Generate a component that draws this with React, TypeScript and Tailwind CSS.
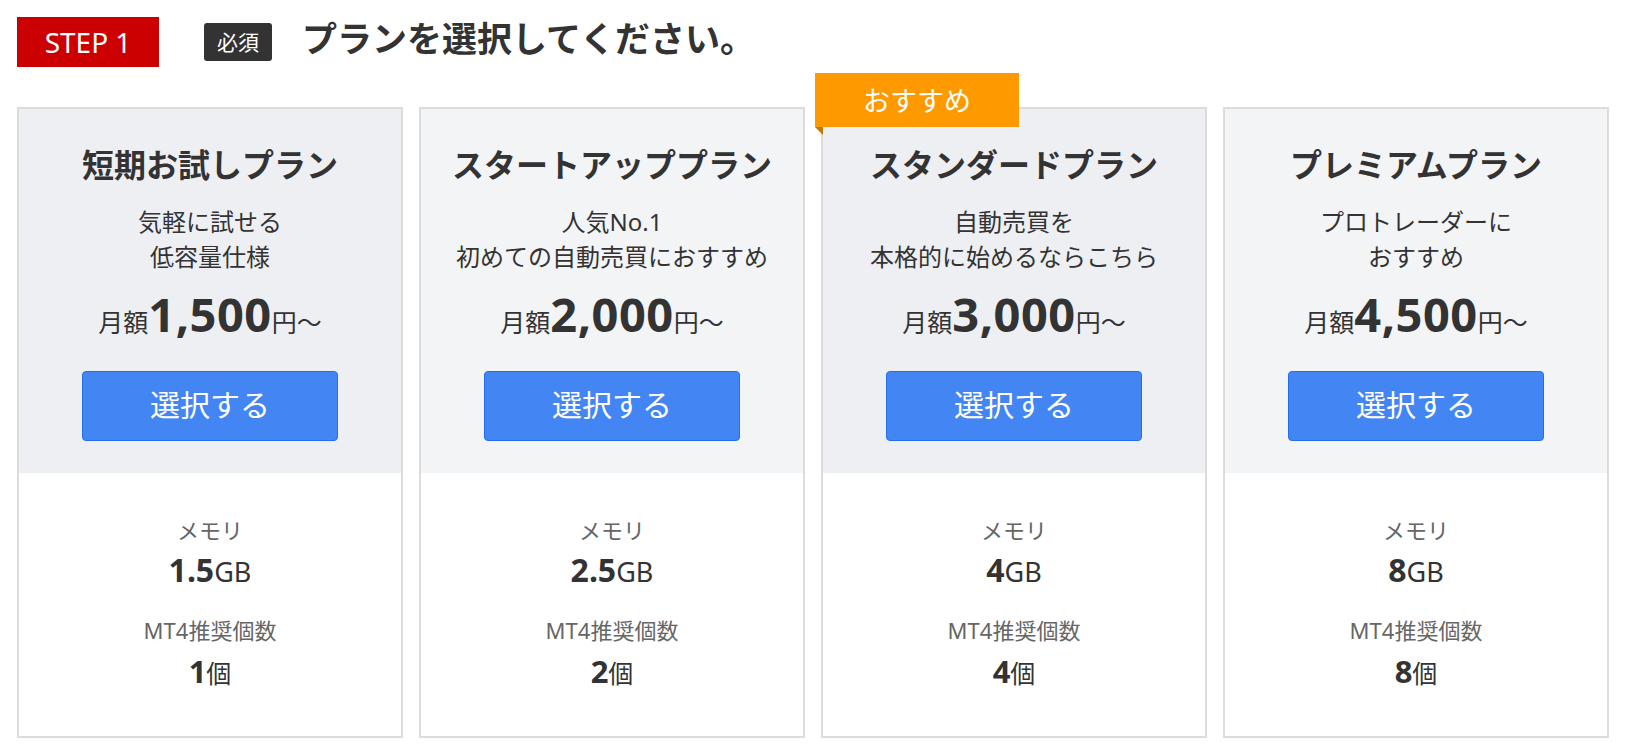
import React from "react";

type Plan = {
  name: string;
  desc: [string, string];
  price: string;
  mem: string;
  mt4: string;
  alt: boolean;
  badge?: boolean;
};

const plans: Plan[] = [
  { name: "短期お試しプラン", desc: ["気軽に試せる", "低容量仕様"], price: "1,500", mem: "1.5", mt4: "1", alt: false },
  { name: "スタートアッププラン", desc: ["人気No.1", "初めての自動売買におすすめ"], price: "2,000", mem: "2.5", mt4: "2", alt: true },
  { name: "スタンダードプラン", desc: ["自動売買を", "本格的に始めるならこちら"], price: "3,000", mem: "4", mt4: "4", alt: false, badge: true },
  { name: "プレミアムプラン", desc: ["プロトレーダーに", "おすすめ"], price: "4,500", mem: "8", mt4: "8", alt: true },
];

function Card({ p }: { p: Plan }) {
  return (
    <div className="relative flex h-[631px] w-[386px] flex-col border-2 border-[#dcdcdc] bg-white">
      {p.badge && (
        <div className="absolute left-[-8px] top-[-36px]">
          <div className="flex h-[54px] w-[204px] items-center justify-center bg-[#ff9900] text-[27px] leading-none text-white">
            おすすめ
          </div>
          <svg width="8" height="8" viewBox="0 0 8 8" className="block">
            <polygon points="0,0 8,0 8,8" fill="#c67700" />
          </svg>
        </div>
      )}
      <div
        className={
          p.alt
            ? "flex h-[364px] flex-col items-center bg-[#f3f4f6] pt-[36px]"
            : "flex h-[364px] flex-col items-center bg-[#eeeff3] pt-[36px]"
        }
      >
        <div className="text-[32px] font-bold leading-[40px] text-[#333]">{p.name}</div>
        <div className="mt-[19px] text-center text-[24px] leading-[35px] text-[#333]">
          <div>{p.desc[0]}</div>
          <div>{p.desc[1]}</div>
        </div>
        <div className="mt-[12px] h-[56px] text-center text-[47px] leading-[56px] text-[#333]">
          <span className="text-[25px] leading-none">月額</span>
          <span className="font-bold tracking-[0.5px]">{p.price}</span>
          <span className="text-[25px] leading-none">円～</span>
        </div>
        <button className="mt-[29px] flex h-[70px] w-[256px] items-center justify-center rounded-[4px] border border-[#1f6ff0] bg-[#4386f3] pb-[4px] text-[30px] text-white">
          選択する
        </button>
      </div>
      <div className="flex flex-1 flex-col items-center pt-[42px]">
        <div className="text-[22px] leading-[30px] text-[#666]">メモリ</div>
        <div className="mt-[5px] text-[32px] leading-[40px] text-[#333]">
          <span className="font-bold">{p.mem}</span>
          <span className="text-[27px] leading-none">GB</span>
        </div>
        <div className="mt-[25px] text-[22px] leading-[30px] text-[#666]">MT4推奨個数</div>
        <div className="mt-[6px] text-[31px] leading-[40px] text-[#333]">
          <span className="font-bold">{p.mt4}</span>
          <span className="text-[25px] leading-none">個</span>
        </div>
      </div>
    </div>
  );
}

export default function App() {
  return (
    <div
      className="min-h-[756px] w-full bg-white"
      style={{ fontFamily: '"Noto Sans", "Noto Sans CJK JP", sans-serif' }}
    >
      <div className="flex items-center pl-[17px] pt-[17px]">
        <div className="flex h-[50px] w-[142px] items-center justify-center bg-[#cc0000] text-[28px] leading-none text-white">
          STEP 1
        </div>
        <div className="ml-[45px] flex h-[38px] w-[68px] items-center justify-center rounded-[3px] bg-[#333] text-[21px] leading-none text-white">
          必須
        </div>
        <div className="ml-[30px] pb-[6px] text-[35px] font-bold leading-[44px] text-[#333]">
          プランを選択してください。
        </div>
      </div>
      <div className="mt-[40px] flex gap-[16px] pl-[17px]">
        {plans.map((p) => (
          <Card key={p.name} p={p} />
        ))}
      </div>
    </div>
  );
}
